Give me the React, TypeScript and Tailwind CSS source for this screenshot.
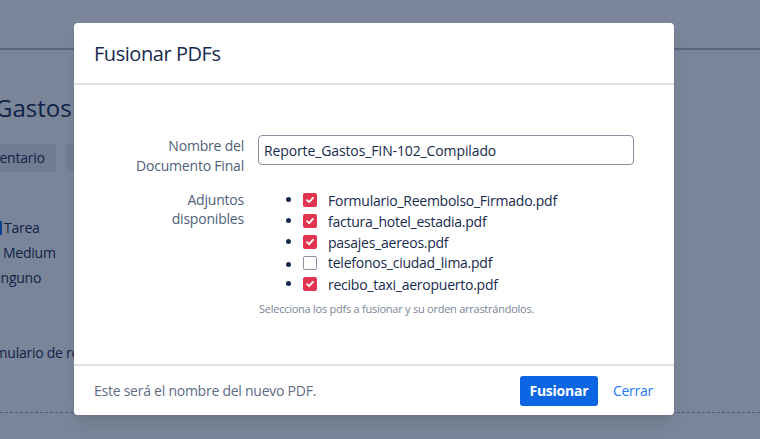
import React, { useState } from 'react';

const font = { fontFamily: '"Open Sans", "Noto Sans", sans-serif' };

interface Attachment {
  name: string;
  selected: boolean;
}

const initialFiles: Attachment[] = [
  { name: 'Formulario_Reembolso_Firmado.pdf', selected: true },
  { name: 'factura_hotel_estadia.pdf', selected: true },
  { name: 'pasajes_aereos.pdf', selected: true },
  { name: 'telefonos_ciudad_lima.pdf', selected: false },
  { name: 'recibo_taxi_aeropuerto.pdf', selected: true },
];

function Checkbox({ checked, onChange }: { checked: boolean; onChange: () => void }) {
  return (
    <button
      type="button"
      onClick={onChange}
      className={`w-[14px] h-[14px] rounded-[2px] flex items-center justify-center shrink-0 ${
        checked ? 'bg-[#e2344f]' : 'bg-white border border-[#8993a4]'
      }`}
    >
      {checked && (
        <svg width="10" height="10" viewBox="0 0 10 10" fill="none">
          <path d="M2 5.2 L4.1 7.2 L8 2.8" stroke="white" strokeWidth="1.8" strokeLinecap="round" strokeLinejoin="round" />
        </svg>
      )}
    </button>
  );
}

// issue page sitting behind the dialog
function IssuePage() {
  return (
    <div className="h-[439px] bg-white text-[#172b4d] overflow-hidden">
      <div className="h-[50px] border-b-2 border-[#b3bac5]" />
      <div className="pt-[43px]">
        <h1 className="text-[24px] leading-[30px] -ml-[5px] whitespace-nowrap">Gastos FIN-102</h1>
        <div className="flex gap-[10px] mt-[21px] -ml-[41px] tracking-[-0.25px]">
          <span className="h-[28px] px-[11px] rounded-[3px] bg-[#ebecf0] text-[14px] leading-[28px]">Comentario</span>
          <span className="h-[28px] px-3 rounded-[3px] bg-[#ebecf0] text-[14px] leading-[28px]">Adjuntar archivo</span>
        </div>
        <div className="mt-[43px] text-[14px] leading-[25px] flex flex-col tracking-[-0.25px]">
          <div className="flex items-center gap-[2px]">
            <span className="w-[2px] h-[14px] bg-[#0c66e4]" />
            <span>Tarea</span>
          </div>
          <div className="pl-[3px]">Medium</div>
          <div className="-ml-[13px]">Ninguno</div>
        </div>
        <div className="mt-[52px] -ml-[26px] text-[14px] whitespace-nowrap tracking-[-0.25px]">Formulario de reembolso</div>
      </div>
      <div className="mt-[49px] border-t border-dashed border-[#97a0af]" />
    </div>
  );
}

export default function App() {
  const [files, setFiles] = useState(initialFiles);
  const [name, setName] = useState('Reporte_Gastos_FIN-102_Compilado');

  const toggle = (i: number) =>
    setFiles(files.map((f, idx) => (idx === i ? { ...f, selected: !f.selected } : f)));

  return (
    <div className="relative w-[760px] h-[439px] overflow-hidden" style={font}>
      <IssuePage />

      <div className="absolute inset-0 bg-[#091e42]/[0.54] pl-[74px] pt-[23px]">
        <div className="w-[600px] bg-white rounded-[4px] shadow-lg">
          <div className="h-[62px] flex items-center px-5 border-b-2 border-[#dfe1e6]">
            <h2 className="text-[20px] text-[#172b4d] pt-[1px] tracking-[-0.45px]">Fusionar PDFs</h2>
          </div>

          <div className="h-[279px] pt-[50px] pl-5 pr-10">
            <div className="grid grid-cols-[150px_1fr] gap-x-[14px] gap-y-[13px]">
              <label className="text-right text-[14px] leading-[20px] text-[#505f79] pt-[1px] tracking-[-0.2px]">
                Nombre del
                <br />
                Documento Final
              </label>
              <input
                value={name}
                onChange={(e) => setName(e.target.value)}
                className="h-[30px] w-full border border-[#8993a4] rounded-[4px] px-[5px] text-[14px] text-[#172b4d] outline-none tracking-[-0.12px]"
              />

              <div className="text-right text-[14px] leading-[19px] text-[#505f79] pt-[1px] tracking-[-0.2px]">
                Adjuntos
                <br />
                disponibles
              </div>
              <div>
                <ul className="list-disc pl-[45px] text-[14px] leading-[21px] text-[#172b4d] tracking-[-0.25px]">
                  {files.map((f, i) => (
                    <li key={f.name} className="h-[21px]">
                      <div className="flex items-center gap-[11px] h-[21px]">
                        <Checkbox checked={f.selected} onChange={() => toggle(i)} />
                        <span>{f.name}</span>
                      </div>
                    </li>
                  ))}
                </ul>
                <p className="mt-[8px] text-[11px] leading-[14px] text-[#7a869a] pl-[1px] tracking-[-0.25px]">
                  Selecciona los pdfs a fusionar y su orden arrastrándolos.
                </p>
              </div>
            </div>
          </div>

          <div className="h-[51px] border-t-2 border-[#dfe1e6] flex items-center justify-between pl-5 pr-[21px] tracking-[-0.25px]">
            <span className="text-[14px] text-[#5e6c84]">Este será el nombre del nuevo PDF.</span>
            <div className="flex items-center gap-[15px]">
              <button className="h-[30px] w-[78px] rounded-[3px] bg-[#0c66e4] text-white text-[14px] font-bold">
                Fusionar
              </button>
              <button className="text-[14px] text-[#1d7afc]">Cerrar</button>
            </div>
          </div>
        </div>
      </div>
    </div>
  );
}
